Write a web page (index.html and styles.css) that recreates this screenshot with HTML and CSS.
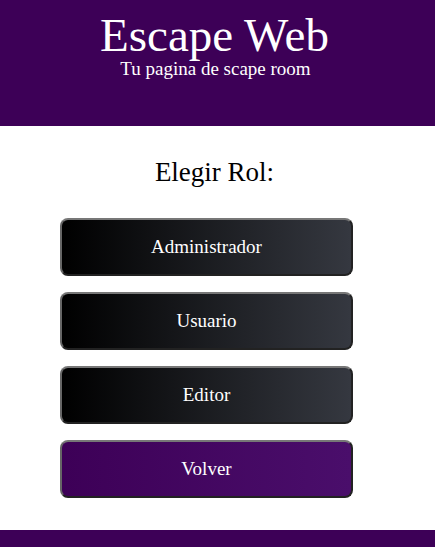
FILE: index.html
```html
<!DOCTYPE html>
<html lang="es">
<head>
<meta charset="utf-8">
<title>Escape Web</title>
<link rel="stylesheet" href="styles.css">
</head>
<body>
<header class="site-header">
  <h1 class="site-title">Escape Web</h1>
  <p class="site-subtitle">Tu pagina de scape room</p>
</header>
<main class="role-main">
  <h2 class="role-heading">Elegir Rol:</h2>
  <div class="role-list">
    <button class="role-btn">Administrador</button>
    <button class="role-btn">Usuario</button>
    <button class="role-btn">Editor</button>
    <button class="role-btn role-btn--back">Volver</button>
  </div>
</main>
<footer class="site-footer"></footer>
</body>
</html>
```
FILE: styles.css
```css
html, body {
  margin: 0;
  padding: 0;
  background: #ffffff;
  font-family: "Liberation Serif", "Times New Roman", serif;
}
.site-header {
  background: #3d0057;
  color: #ffffff;
  height: 126px;
  box-sizing: border-box;
  padding-top: 10px;
  text-align: center;
}
.site-title {
  margin: 0;
  font-weight: normal;
  font-size: 47px;
  line-height: 50px;
  padding-right: 6px;
}
.site-subtitle {
  margin: 0;
  font-size: 19px;
  line-height: 18px;
  padding-right: 4px;
}
.role-main {
  height: 404px;
  box-sizing: border-box;
}
.role-heading {
  margin: 0;
  padding-top: 30px;
  padding-right: 6px;
  text-align: center;
  font-weight: normal;
  font-size: 27px;
  line-height: 32px;
  color: #000;
}
.role-list {
  display: flex;
  flex-direction: column;
  align-items: flex-start;
  gap: 16px;
  padding-left: 60px;
  margin-top: 30px;
}
.role-btn {
  width: 293px;
  height: 58px;
  border: 2px solid;
  border-color: #777777 #222222 #222222 #666666;
  border-radius: 8px;
  background: linear-gradient(to right, #000000, #353840);
  color: #ffffff;
  font-family: "Liberation Serif", "Times New Roman", serif;
  font-size: 19px;
  cursor: pointer;
}
.role-btn--back {
  background: linear-gradient(to right, #3d0057, #4a0e6b);
}
.site-footer {
  background: #3d0057;
  height: 17px;
}
```
